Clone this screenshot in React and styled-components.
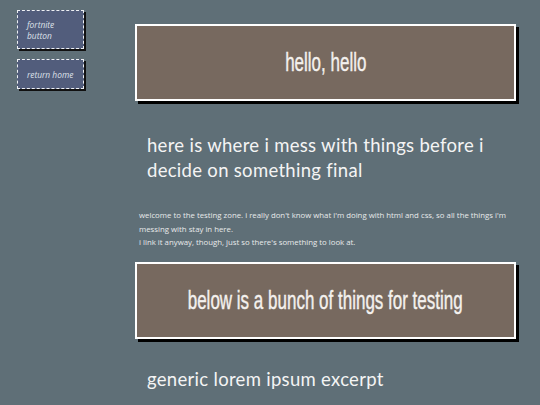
import styled, { createGlobalStyle } from "styled-components";

const GlobalStyle = createGlobalStyle`
    html, body {
        margin: 0;
        padding: 0;
        background: #5f6f77;
    }
    * { box-sizing: border-box; }
`

const Page = styled.div`
    display: flex;
    align-items: flex-start;
    gap: 51px;
    padding: 10px 0 0 17px;
    min-height: 405px;
    overflow: hidden;
`

const Side = styled.nav`
    display: flex;
    flex-direction: column;
    gap: 10px;
    width: 67px;
    flex-shrink: 0;
`

const SideButton = styled.a`
    display: flex;
    align-items: center;
    height: ${props => props.$tall ? "39px" : "30px"};
    padding: 0 0 0 9px;
    background: #525d7c;
    border: 1px dashed #eef0f4;
    box-shadow: 2px 2px 0 #111;
    font-family: "Open Sans", sans-serif;
    font-style: italic;
    font-size: 8.4px;
    line-height: 11px;
    white-space: nowrap;
    color: #dfe2ea;
    text-decoration: none;
`

const Main = styled.main`
    display: flex;
    flex-direction: column;
    width: 381px;
    flex-shrink: 0;
    padding-top: 14px;
`

const Banner = styled.div`
    display: flex;
    align-items: center;
    justify-content: center;
    height: 77px;
    margin-top: ${props => props.$top || "0"};
    background: #77695f;
    border: 2px solid #fff;
    box-shadow: 3px 3px 0 #000;
    color: #f4f1ee;
`

/* narrow display face, squeezed from a regular sans */
const BannerText = styled.span`
    display: inline-block;
    font-family: "Liberation Sans", sans-serif;
    font-size: 25px;
    line-height: 1;
    white-space: nowrap;
    -webkit-text-stroke: 0.4px #f4f1ee;
    transform: scaleX(0.68);
`

const Subtitle = styled.h2`
    margin: ${props => props.$m || "32px 0 0 12px"};
    font-family: "Lato", sans-serif;
    font-weight: 400;
    font-size: 18.5px;
    line-height: 25px;
    letter-spacing: 0.3px;
    color: #f4f4f4;
`

const Blurb = styled.p`
    margin: 26px 0 0 4px;
    font-family: "Open Sans", sans-serif;
    font-size: 7.8px;
    line-height: 13.5px;
    color: #e8eaeb;
`

const App = () => {
    return (
        <>
            <GlobalStyle />
            <Page>
                {/* side links */}
                <Side>
                    <SideButton $tall href="#">fortnite<br />button</SideButton>
                    <SideButton href="#">return home</SideButton>
                </Side>

                <Main>
                    <Banner><BannerText>hello, hello</BannerText></Banner>
                    <Subtitle>here is where i mess with things before i decide on something final</Subtitle>
                    <Blurb>
                        welcome to the testing zone. i really don't know what i'm doing with html and css, so all the things i'm messing with stay in here.
                        <br />
                        i link it anyway, though, just so there's something to look at.
                    </Blurb>
                    <Banner $top="12px"><BannerText>below is a bunch of things for testing</BannerText></Banner>
                    <Subtitle $m="28px 0 0 12px">generic lorem ipsum excerpt</Subtitle>
                </Main>
            </Page>
        </>
    )
}

export default App;
